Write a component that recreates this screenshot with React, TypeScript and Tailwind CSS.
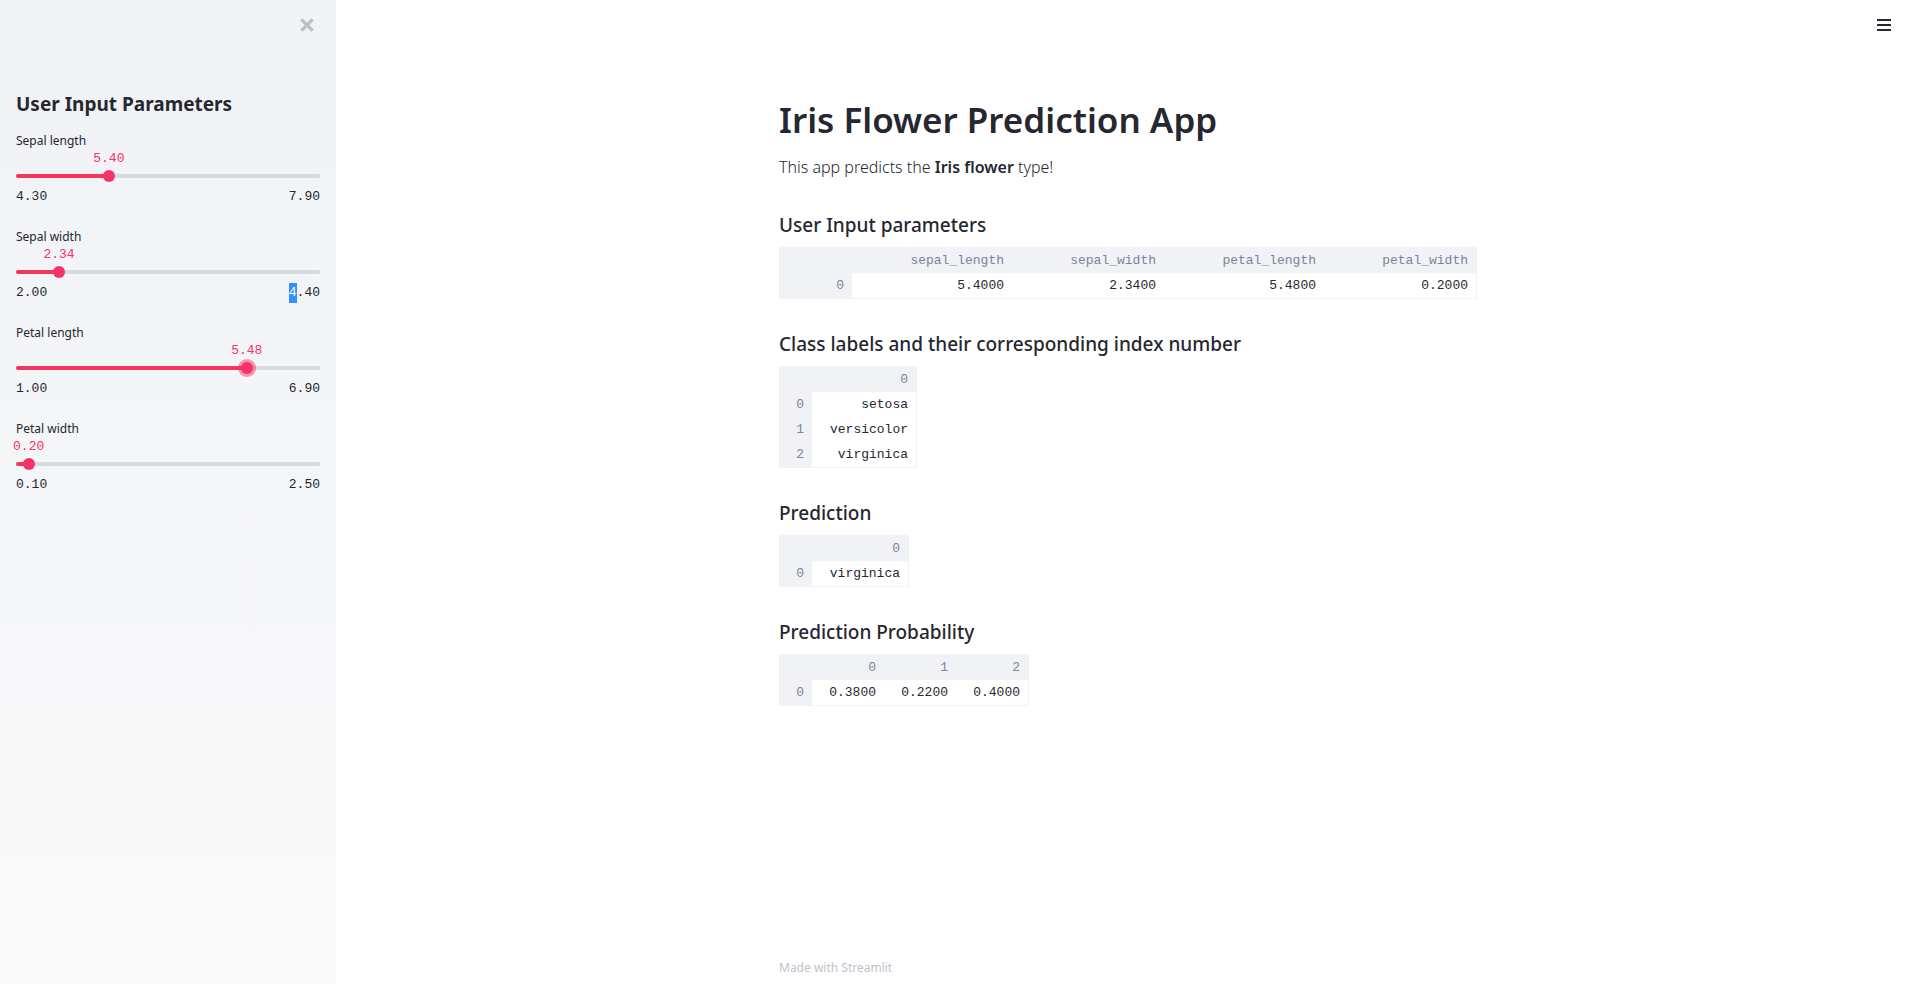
import { useId, useState, type ReactNode } from "react";

type SliderProps = {
  label: string;
  min: number;
  max: number;
  initial: number;
  active?: boolean;
  maxLabel?: ReactNode;
};

function Slider({ label, min, max, initial, active = false, maxLabel }: SliderProps) {
  const id = useId();
  const [value, setValue] = useState(initial);
  const percent = ((value - min) / (max - min)) * 100;

  return (
    <div className="h-24">
      <label htmlFor={id} className="block text-[12px] leading-5 text-[#262730]">
        {label}
      </label>
      <div className="relative h-9 pt-[23px]">
        <output
          htmlFor={id}
          className="absolute top-[-2px] -translate-x-1/2 font-['Liberation_Mono',monospace] text-[13px] leading-5 text-[#f63366]"
          style={{ left: `${percent}%` }}
        >
          {value.toFixed(2)}
        </output>
        <div className="h-1 overflow-hidden rounded-full bg-[#d5dae5]">
          <div className="h-full bg-[#f63366]" style={{ width: `${percent}%` }} />
        </div>
        <input
          id={id}
          type="range"
          min={min}
          max={max}
          step={0.01}
          value={value}
          onChange={(event) => setValue(Number(event.target.value))}
          className={
            "absolute top-[19px] -left-1.5 h-3 w-[calc(100%+12px)] cursor-pointer appearance-none bg-transparent outline-none [&::-webkit-slider-thumb]:size-3 [&::-webkit-slider-thumb]:appearance-none [&::-webkit-slider-thumb]:rounded-full [&::-webkit-slider-thumb]:bg-[#f63366] focus-visible:[&::-webkit-slider-thumb]:shadow-[0_0_0_3px_rgba(246,51,102,0.5)] " +
            (active ? "[&::-webkit-slider-thumb]:shadow-[0_0_0_3px_rgba(246,51,102,0.5)]" : "")
          }
        />
      </div>
      <div className="flex justify-between font-['Liberation_Mono',monospace] text-[13px] leading-5 text-[#262730]">
        <span>{min.toFixed(2)}</span>
        <span>{maxLabel ?? max.toFixed(2)}</span>
      </div>
    </div>
  );
}

type DataTableProps = {
  label: string;
  columns: string[];
  rows: string[][];
  indexWidth: string;
  columnWidths: string[];
};

function DataTable({ label, columns, rows, indexWidth, columnWidths }: DataTableProps) {
  return (
    <table
      aria-label={label}
      className="table-fixed border-separate border-spacing-0 border-r border-b border-[#f0f2f6] text-right font-['Liberation_Mono',monospace] text-[13px] leading-[25px]"
    >
      <colgroup>
        <col className={indexWidth} />
        {columnWidths.map((width, i) => (
          <col key={i} className={width} />
        ))}
      </colgroup>
      <thead>
        <tr className="h-[26px] bg-[#f0f2f6] text-[#7d849b]">
          <td />
          {columns.map((column) => (
            <th key={column} scope="col" className="pr-2 font-normal">
              {column}
            </th>
          ))}
        </tr>
      </thead>
      <tbody>
        {rows.map((row, i) => (
          <tr key={i} className="h-[25px] text-[#262730]">
            <th scope="row" className="bg-[#f0f2f6] pr-2 font-normal text-[#7d849b]">
              {i}
            </th>
            {row.map((cell, j) => (
              <td key={j} className="pr-2">
                {cell}
              </td>
            ))}
          </tr>
        ))}
      </tbody>
    </table>
  );
}

function Section({ title, children }: { title: string; children: ReactNode }) {
  return (
    <section className="flex flex-col items-start gap-2">
      <h3 className="text-[19px] leading-7 font-medium">{title}</h3>
      {children}
    </section>
  );
}

export default function App() {
  return (
    <div className="flex min-h-screen bg-white font-['Noto_Sans',sans-serif] text-[#262730]">
      <aside className="w-[336px] shrink-0 bg-linear-to-b from-[#f0f2f6] to-[#fafafa] px-4">
        <div className="flex h-[88px] justify-end pt-[18px] pr-1.5">
          <button type="button" aria-label="Close sidebar" className="size-3.5 text-[#bfc0c6]">
            <svg viewBox="0 0 14 14" className="size-3.5" fill="none" stroke="currentColor" strokeWidth="3.4">
              <path d="M1.4 1.4 12.6 12.6M12.6 1.4 1.4 12.6" />
            </svg>
          </button>
        </div>
        <h2 className="mb-[11px] text-[19px] leading-8 font-bold">User Input Parameters</h2>
        <Slider label="Sepal length" min={4.3} max={7.9} initial={5.4} />
        <Slider
          label="Sepal width"
          min={2}
          max={4.4}
          initial={2.34}
          maxLabel={
            <>
              <span className="inline-block bg-[#3390ff] text-white">4</span>.40
            </>
          }
        />
        <Slider label="Petal length" min={1} max={6.9} initial={5.48} active />
        <Slider label="Petal width" min={0.1} max={2.5} initial={0.2} />
      </aside>

      <div className="flex grow flex-col">
        <header className="flex h-[50px] items-center justify-end pr-7">
          <button type="button" aria-label="Main menu" className="size-4">
            <svg viewBox="0 0 16 16" className="size-4" fill="none" stroke="#262730" strokeWidth="2">
              <path d="M1 3h14M1 8h14M1 13h14" />
            </svg>
          </button>
        </header>
        <div className="mx-auto flex w-full max-w-[698px] grow flex-col">
          <main className="flex grow flex-col pt-[46px]">
            <h1 className="text-[35px] leading-[48px] font-semibold">Iris Flower Prediction App</h1>
            <p className="mt-[11px] text-[16px] leading-6 font-light">
              This app predicts the <strong className="font-semibold">Iris flower</strong> type!
            </p>
            <div className="mt-8 flex flex-col gap-[31px]">
              <Section title="User Input parameters">
                <DataTable
                  label="User Input parameters"
                  columns={["sepal_length", "sepal_width", "petal_length", "petal_width"]}
                  rows={[["5.4000", "2.3400", "5.4800", "0.2000"]]}
                  indexWidth="w-[73px]"
                  columnWidths={["w-40", "w-[152px]", "w-40", "w-[152px]"]}
                />
              </Section>
              <Section title="Class labels and their corresponding index number">
                <DataTable
                  label="Class labels"
                  columns={["0"]}
                  rows={[["setosa"], ["versicolor"], ["virginica"]]}
                  indexWidth="w-[33px]"
                  columnWidths={["w-[104px]"]}
                />
              </Section>
              <Section title="Prediction">
                <DataTable
                  label="Prediction"
                  columns={["0"]}
                  rows={[["virginica"]]}
                  indexWidth="w-[33px]"
                  columnWidths={["w-24"]}
                />
              </Section>
              <Section title="Prediction Probability">
                <DataTable
                  label="Prediction Probability"
                  columns={["0", "1", "2"]}
                  rows={[["0.3800", "0.2200", "0.4000"]]}
                  indexWidth="w-[33px]"
                  columnWidths={["w-[72px]", "w-[72px]", "w-[72px]"]}
                />
              </Section>
            </div>
          </main>
          <footer className="pb-1.5 text-[12px] leading-5 text-[#c0c2ce]">
            Made with{" "}
            <a href="https://streamlit.io">Streamlit</a>
          </footer>
        </div>
      </div>
    </div>
  );
}
